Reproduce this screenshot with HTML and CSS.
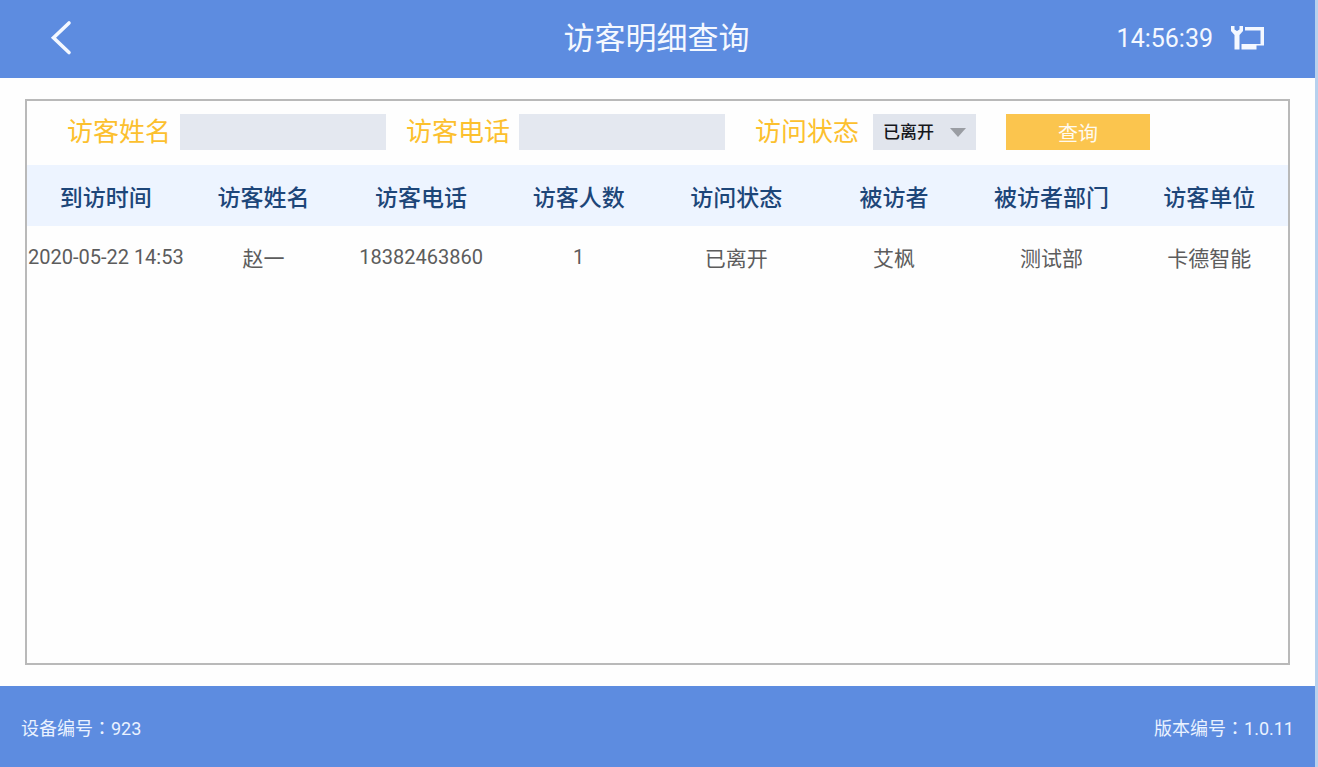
FILE: index.html
```html
<!DOCTYPE html>
<html lang="zh-CN">
<head>
<meta charset="utf-8">
<meta name="viewport" content="width=device-width, initial-scale=1">
<title>访客明细查询</title>
<link rel="stylesheet" href="styles.css">
</head>
<body>
<header class="topbar">
  <button class="back" type="button" aria-label="返回">
    <svg width="24" height="38" viewBox="0 0 24 38" fill="none" stroke="currentColor" stroke-width="3.600" stroke-linecap="round"><path d="M21 3 5.500 17.700 21 32.500"/></svg>
  </button>
  <h1 class="title">访客明细查询</h1>
  <div class="status">
    <time class="clock">14:56:39</time>
    <svg class="net" width="35" height="26" viewBox="0 0 35 26" fill="currentColor" aria-hidden="true">
      <path d="M1 0h3.500v3.500L7 5l2.500-1.500V0H13v5L9.500 9v14.500h-5V9L1 5z"/>
      <path d="M15 1h19v18.500h-7.500V23.500H11.500V18H30.500V4.500H15z"/>
    </svg>
  </div>
</header>

<main class="content">
  <section class="panel">
    <form class="filters">
      <div class="field">
        <label for="name">访客姓名</label>
        <input class="box" id="name" type="text">
      </div>
      <div class="field">
        <label for="phone">访客电话</label>
        <input class="box" id="phone" type="text">
      </div>
      <div class="field field-state">
        <label for="state">访问状态</label>
        <div class="select">
          <select id="state"><option>已离开</option></select>
          <svg class="arrow" width="16" height="9" viewBox="0 0 16 9" aria-hidden="true"><path d="M0 0h16L8 9z" fill="#9a9da3"/></svg>
        </div>
      </div>
      <button class="query" type="button">查询</button>
    </form>

    <table class="records">
      <thead>
        <tr>
          <th>到访时间</th><th>访客姓名</th><th>访客电话</th><th>访客人数</th>
          <th>访问状态</th><th>被访者</th><th>被访者部门</th><th>访客单位</th>
        </tr>
      </thead>
      <tbody>
        <tr>
          <td class="num">2020-05-22 14:53</td><td>赵一</td><td class="num">18382463860</td><td class="num">1</td>
          <td>已离开</td><td>艾枫</td><td>测试部</td><td>卡德智能</td>
        </tr>
      </tbody>
    </table>
  </section>
</main>

<footer class="bottombar">
  <span>设备编号<span class="colon" lang="zh-TW">：</span>923</span>
  <span>版本编号<span class="colon" lang="zh-TW">：</span>1.0.11</span>
</footer>
</body>
</html>
```
FILE: styles.css
```css
* {
  box-sizing: border-box;
}

body {
  margin: 0;
  min-height: 100vh;
  display: flex;
  flex-direction: column;
  border-right: 3px solid #b7d1ee;
  background: #fefefe;
  color: #5c5c5c;
  font-family: Roboto, "Noto Sans CJK SC", sans-serif;
}

button,
input,
select {
  margin: 0;
  border: 0;
  border-radius: 0;
  font-family: inherit;
}

.topbar {
  display: grid;
  grid-template-columns: 1fr auto 1fr;
  align-items: center;
  height: 78px;
  padding: 0 50px 0 48px;
  background: #5d8ce0;
  color: #f4f8ff;
}

.back {
  display: flex;
  justify-self: start;
  padding: 0;
  background: none;
  color: #f4f8ff;
}

.title {
  margin: 0;
  font-size: 31px;
  font-weight: 400;
  line-height: 40px;
}

.status {
  display: flex;
  justify-self: end;
  align-items: center;
  gap: 17px;
}

.clock {
  font-size: 25px;
  line-height: 32px;
}

.content {
  flex: 1;
  display: flex;
  padding: 21px 25px;
}

.panel {
  flex: 1;
  border: 2px solid #b9b9b9;
}

.filters {
  display: flex;
  align-items: center;
  gap: 20px;
  height: 64px;
  padding: 0 0 2px 40px;
}

.field {
  display: flex;
  align-items: center;
  gap: 9px;
}

.field label {
  color: #fcc02e;
  font-size: 26px;
  line-height: 36px;
  white-space: nowrap;
}

.field-state {
  gap: 14px;
  margin: 0 10px;
}

.box {
  width: 206px;
  height: 36px;
  padding: 0 8px;
  background: #e4e8f0;
  font-size: 20px;
}

.select {
  position: relative;
}

.select select {
  display: block;
  width: 103px;
  height: 36px;
  padding: 0 10px;
  appearance: none;
  background: #e1e5ed;
  color: #15171c;
  font-size: 17px;
  font-weight: 500;
}

.arrow {
  position: absolute;
  top: 14px;
  right: 10px;
  pointer-events: none;
}

.query {
  width: 144px;
  height: 36px;
  padding: 0;
  background: #fbc54e;
  color: #fffaf0;
  font-size: 20px;
}

.records {
  width: 100%;
  table-layout: fixed;
  border-collapse: collapse;
  text-align: center;
  white-space: nowrap;
}

.records th {
  height: 61px;
  padding: 0;
  background: #edf4ff;
  color: #1d4679;
  font-size: 23px;
  font-weight: 500;
}

.records td {
  height: 62px;
  padding: 0;
  font-size: 21px;
}

.records .num {
  font-size: 20px;
}

.bottombar {
  display: flex;
  justify-content: space-between;
  align-items: center;
  height: 81px;
  padding: 0 21px;
  background: #5d8ce0;
  color: #eaf2ff;
  font-size: 18px;
}

.colon {
  font-family: "Noto Sans CJK TC", sans-serif;
}
```
